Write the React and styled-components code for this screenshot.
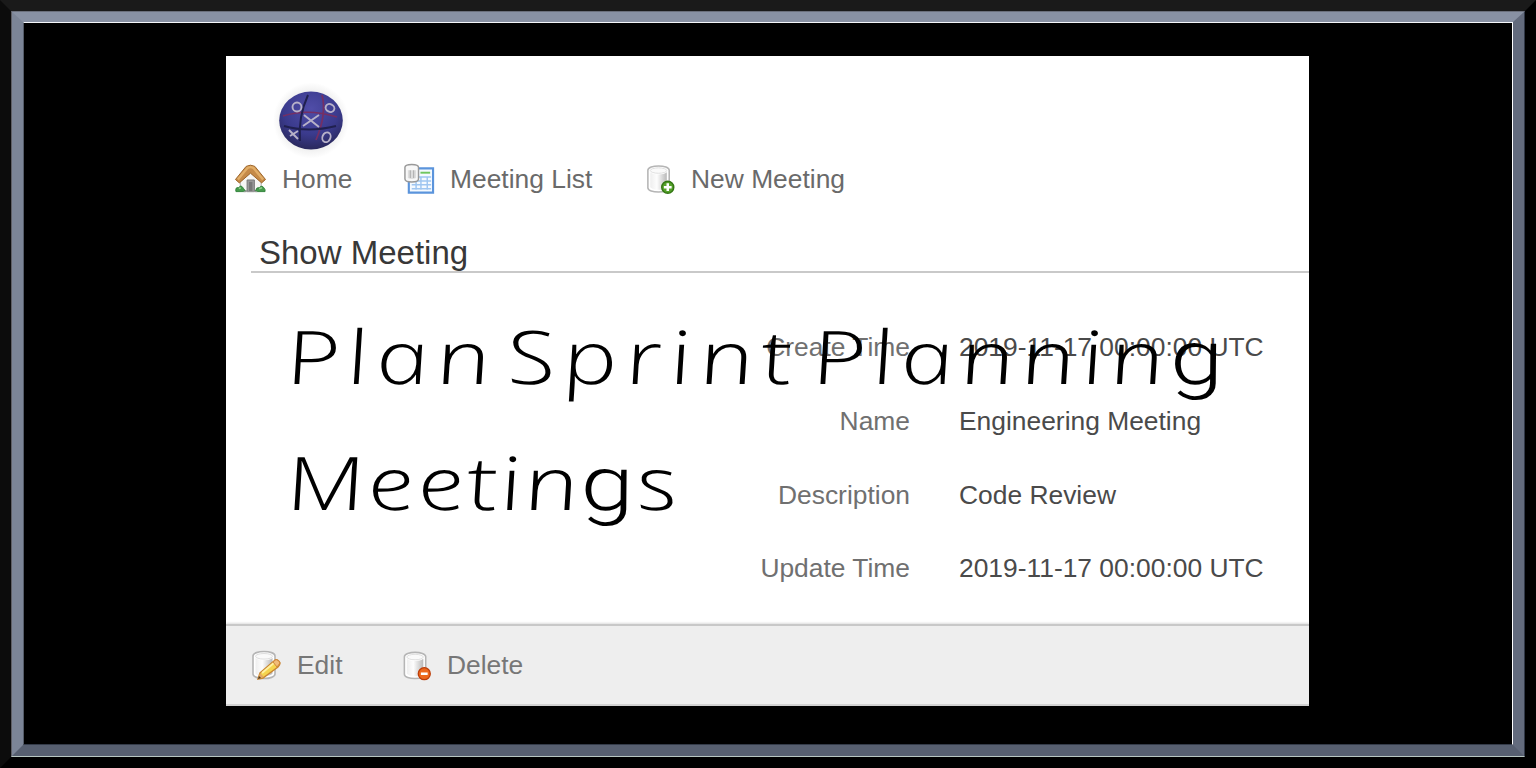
import React from "react";
import styled, { createGlobalStyle } from "styled-components";

const Global = createGlobalStyle`
  * { box-sizing: border-box; }
  body { margin: 0; background: #000; overflow: hidden; font-family: "Liberation Sans", Arial, sans-serif; }
`;

const OuterFrame = styled.div`
  width: 1536px;
  height: 768px;
  border: 11px solid;
  border-color: #1a1a1a #000 #000 #0c0c0c;
  background: #000;
`;
const FrameEdge = styled.div`
  height: 100%;
  border: 1px solid;
  border-color: ${(p) => p.$colors};
`;
const Bevel = styled.div`
  height: 100%;
  border: 11px solid;
  border-top-width: 10px;
  border-color: #8891a3 #636b7d #575f70 #7c8597;
`;
const Stage = styled.div`
  height: 100%;
  display: flex;
  padding: 33px 0 0 202px;
`;
const Panel = styled.main`
  position: relative;
  width: 1083px;
  height: 650px;
  background: #fff;
  display: flex;
  flex-direction: column;
  overflow: hidden;
`;
const Logo = styled.svg`
  display: block;
  width: 76px;
  height: 76px;
  margin: 26px 0 0 47px;
  flex: none;
`;
const Nav = styled.nav`
  display: flex;
  height: 42px;
  padding-left: 8px;
`;
const Action = styled.a`
  display: flex;
  align-items: center;
  width: ${(p) => p.$width}px;
  gap: ${(p) => p.$gap}px;
  color: ${(p) => p.$color || "#6a6a6a"};
  font-size: 26.4px;
  line-height: 30px;
  white-space: nowrap;
`;
const Icon = styled.svg`
  width: 32px;
  height: 32px;
  flex: none;
`;
const Title = styled.h1`
  margin: 34px 0 0 25px;
  padding-left: 8px;
  height: 39px;
  border-bottom: 2px solid #c9c9c9;
  color: #383838;
  font-size: 33px;
  font-weight: 400;
  line-height: 37px;
  white-space: nowrap;
`;
const Details = styled.dl`
  margin: 37px 0 0;
  display: grid;
  grid-template-columns: 684px auto;
  column-gap: 49px;
  grid-auto-rows: 73.8px;
  font-size: 26.4px;
  line-height: 74px;
`;
const Term = styled.dt`
  text-align: right;
  color: #707070;
  white-space: nowrap;
`;
const Value = styled.dd`
  margin: 0;
  color: #4a4a4a;
  white-space: nowrap;
`;
const Footer = styled.footer`
  margin-top: auto;
  height: 82px;
  display: flex;
  padding: 0 0 1px 24px;
  background: #eee;
  border-top: 2px solid #c8c8c8;
  border-bottom: 2px solid #d2d2d2;
  box-shadow: 0 -1px 2px #ddd;
`;
const Headline = styled.div`
  position: absolute;
  left: 58px;
  top: 237px;
  color: #000;
  font-family: "Open Sans", sans-serif;
  font-style: italic;
  font-weight: 300;
  font-size: 74px;
  line-height: 126px;
`;
const Line = styled.div`
  display: flex;
  height: 126px;
`;
const Word = styled.span`
  width: ${(p) => p.$width}px;
  letter-spacing: ${(p) => p.$spacing}px;
  transform: skewX(12deg) scaleX(1.3);
  transform-origin: 0 50%;
  white-space: nowrap;
`;
const TailedG = styled.span`
  font-family: Roboto, sans-serif;
  font-size: 76px;
  line-height: 1;
`;

const Cylinder = ({ id }) => (
  <>
    <defs>
      <linearGradient id={id}>
        <stop offset="0" stopColor="#eee" />
        <stop offset=".4" stopColor="#fdfdfd" />
        <stop offset="1" stopColor="#b9b9b9" />
      </linearGradient>
    </defs>
    <path d="M3 7C3 1 25 1 25 7V25C25 31 3 31 3 25Z" fill="#fff" stroke="#b5b5b5" strokeWidth="1.6" />
    <path d="M5.5 9C9 12 19 12 22.5 9V24.500C20 28 8 28 5.500 24.500Z" fill={`url(#${id})`} />
    <ellipse cx="14" cy="7.300" rx="8.500" ry="2.800" fill="#fafafa" stroke="#dedede" />
  </>
);

const HomeIcon = () => (
  <Icon viewBox="-1 -.5 33 33">
    <path d="M5.500 17L16 6L27 17V28H5.500Z" fill="#f6f6f4" stroke="#aaa" />
    <path d="M12.500 17H20V29H12.500Z" fill="#999" stroke="#777" />
    <path d="M14.500 19H18V29H14.500Z" fill="#777" />
    <path d="M.5 16.500L11.500 3Q16 .500 20.500 3L31.500 16.500L27.500 20L16 10L4.500 20Z" fill="#c58a48" stroke="#9b6328" />
    <path d="M3 16.500L13 4.500Q16 3 19 4.500L29 16.500" fill="none" stroke="#e2ae68" strokeWidth="2.500" />
    <path d="M1 29Q0 24 4 25Q6 21 9 26L11 29ZM21 29Q22 24 25 25Q28 21 31 27V29Z" fill="#459b4b" stroke="#32823b" />
    <path d="M4 26L6 25M25 26L28 25" stroke="#92cf8e" strokeWidth="1.500" />
    <path d="M9 29H23" stroke="#999" />
  </Icon>
);

const ListIcon = () => (
  <Icon viewBox="-1 -.5 33 33">
    <path d="M5 5H30V30H5Z" fill="#f5faff" stroke="#5b94dc" strokeWidth="2.200" />
    <path d="M17 9.500H27" stroke="#70c65f" strokeWidth="2" />
    <path d="M8 14H28M8 18H28M8 22H28M8 26H28M12.500 14V27M17.500 14V27M24 14V27" stroke="#9fc6f1" strokeWidth="1.500" />
    <path d="M1 4Q1 1 8 1Q15 1 15 4V16Q15 19 8 19Q1 19 1 16Z" fill="#f8f8f8" stroke="#999" strokeWidth="1.500" />
    <path d="M4 7H12.500V15Q8 17 4 15Z" fill="#ddd" />
    <path d="M6.500 7V15M10 7V15" stroke="#aaa" />
  </Icon>
);

const NewIcon = () => (
  <Icon viewBox="-1 -.5 33 33">
    <Cylinder id="new-cylinder" />
    <circle cx="23.500" cy="24.500" r="6.200" fill="#55a22a" stroke="#347714" strokeWidth="1.500" />
    <path d="M23.500 20.500V28.500M19.500 24.500H27.500" stroke="#fff" strokeWidth="2.600" />
  </Icon>
);

const EditIcon = () => (
  <Icon viewBox="0 0 32 32">
    <Cylinder id="edit-cylinder" />
    <path d="M8 30L10 24L25 11Q28 10 30 14Q30 16 28 18L13 29Z" fill="#f5d44e" stroke="#c98530" strokeWidth="1.400" />
    <path d="M12 24L25 13" stroke="#fff1a0" strokeWidth="2" />
    <path d="M23 13L26 10.500Q29 11 30 14L27 18Z" fill="#f1bc78" stroke="#cf863c" />
    <path d="M8 30L10 24L14 28Z" fill="#e3aa65" />
    <path d="M8 30L9 27L11 29Z" fill="#49371e" />
  </Icon>
);

const DeleteIcon = () => (
  <Icon viewBox="-.5 -1 33 33">
    <Cylinder id="delete-cylinder" />
    <circle cx="23.500" cy="24.500" r="6.200" fill="#ed681d" stroke="#bc3d09" strokeWidth="1.300" />
    <path d="M20 24.500H27" stroke="#fff" strokeWidth="2.600" />
  </Icon>
);

const BallLogo = () => (
  <Logo viewBox="0 0 76 76">
    <defs>
      <radialGradient id="ball" cx="50%" cy="30%" r="68%">
        <stop offset="0" stopColor="#504da8" />
        <stop offset=".65" stopColor="#3a3a8c" />
        <stop offset="1" stopColor="#2b2a60" />
      </radialGradient>
      <radialGradient id="halo">
        <stop offset=".7" stopColor="#ececec" />
        <stop offset="1" stopColor="#fff" />
      </radialGradient>
    </defs>
    <circle cx="38" cy="38.500" r="38" fill="url(#halo)" />
    <ellipse cx="38" cy="38.500" rx="31.800" ry="29" fill="url(#ball)" />
    <path d="M10 34Q35 26 64 35M49 13Q54 32 43 58" fill="none" stroke="#752f64" strokeWidth="1.700" />
    <path d="M35 13Q25 35 27 59M11 44Q35 51 63 44" fill="none" stroke="#20204f" strokeWidth="2" />
    <g fill="none" stroke="#b8b2c9" strokeWidth="1.900">
      <ellipse cx="24" cy="25" rx="4.500" ry="4.500" />
      <ellipse cx="57" cy="26" rx="4.500" ry="3.800" transform="rotate(25 57 26)" />
      <path d="M31 33L46 45M46 33L30 44M16 48L25 57M25 49L17 54" />
      <ellipse cx="53.500" cy="55" rx="4" ry="5" transform="rotate(24 53 55)" />
    </g>
  </Logo>
);

const rows = [
  ["Create Time", "2019-11-17 00:00:00 UTC"],
  ["Name", "Engineering Meeting"],
  ["Description", "Code Review"],
  ["Update Time", "2019-11-17 00:00:00 UTC"],
];

export default function App() {
  return (
    <>
      <Global />
      <OuterFrame>
        <FrameEdge $colors="#6b707c #303746 #b9c7c2 #5f5f65">
          <Bevel>
            <FrameEdge $colors="#f4f6fa #fff #343b49 #555c69">
              <Stage>
                <Panel>
                  <BallLogo />
                  <Nav>
                    <Action $width={169} $gap={16}><HomeIcon />Home</Action>
                    <Action $width={241} $gap={15}><ListIcon />Meeting List</Action>
                    <Action $width={240} $gap={15}><NewIcon />New Meeting</Action>
                  </Nav>
                  <Title>Show Meeting</Title>
                  <Details>
                    {rows.map(([term, value]) => (
                      <React.Fragment key={term}>
                        <Term>{term}</Term>
                        <Value>{value}</Value>
                      </React.Fragment>
                    ))}
                  </Details>
                  <Footer>
                    <Action $width={151} $gap={15} $color="#777"><EditIcon />Edit</Action>
                    <Action $width={160} $gap={14} $color="#777"><DeleteIcon />Delete</Action>
                  </Footer>
                  <Headline>
                    <Line>
                      <Word $width={221} $spacing={5.5}>Plan</Word>
                      <Word $width={305} $spacing={6}>Sprint</Word>
                      <Word $width={410} $spacing={5}>Plannin<TailedG>g</TailedG></Word>
                    </Line>
                    <Line>
                      <Word $width={390} $spacing={1.9}>Meetin<TailedG>g</TailedG>s</Word>
                    </Line>
                  </Headline>
                </Panel>
              </Stage>
            </FrameEdge>
          </Bevel>
        </FrameEdge>
      </OuterFrame>
    </>
  );
}
